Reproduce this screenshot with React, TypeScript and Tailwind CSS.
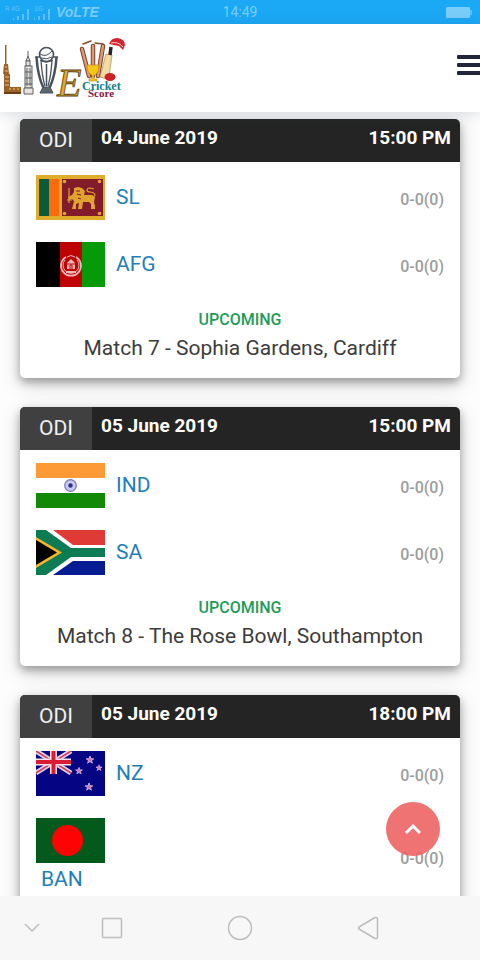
import React from 'react'

type Team = { code: string; name: string; score: string; wrap?: boolean }
type Match = { type: string; date: string; time: string; teams: Team[]; status?: string; venue?: string }

const MATCHES: Match[] = [
  {
    type: 'ODI', date: '04 June 2019', time: '15:00 PM', status: 'UPCOMING',
    venue: 'Match 7 - Sophia Gardens, Cardiff',
    teams: [{ code: 'SL', name: 'Sri Lanka', score: '0-0(0)' }, { code: 'AFG', name: 'Afghanistan', score: '0-0(0)' }],
  },
  {
    type: 'ODI', date: '05 June 2019', time: '15:00 PM', status: 'UPCOMING',
    venue: 'Match 8 - The Rose Bowl, Southampton',
    teams: [{ code: 'IND', name: 'India', score: '0-0(0)' }, { code: 'SA', name: 'South Africa', score: '0-0(0)' }],
  },
  {
    type: 'ODI', date: '05 June 2019', time: '18:00 PM',
    teams: [{ code: 'NZ', name: 'New Zealand', score: '0-0(0)' }, { code: 'BAN', name: 'Bangladesh', score: '0-0(0)', wrap: true }],
  },
]

const STAR = '0,-4 1,-1.2 3.8,-1.2 1.5,0.5 2.4,3.2 0,1.6 -2.4,3.2 -1.5,0.5 -3.8,-1.2 -1,-1.2'

function FlagArt({ code }: { code: string }) {
  switch (code) {
    case 'SL':
      return (
        <>
          <rect width="69" height="45" fill="#e0ac2b" />
          <rect x="3" y="4" width="10" height="37" fill="#0b5a3c" />
          <rect x="13" y="4" width="10" height="37" fill="#fb6a0c" />
          <rect x="26" y="4" width="41" height="37" fill="#821c2a" />
          <g fill="#e0a32f">
            <circle cx="28.5" cy="6.5" r="1.8" /><circle cx="63.5" cy="6.5" r="1.8" />
            <circle cx="28.5" cy="38.5" r="1.8" /><circle cx="63.5" cy="38.5" r="1.8" />
            <path d="M38 13 l4 -1 4 1 3 3 -1 4 h8 l3 2 -1 5 1 4 v3 h-4 l0 -5 -2 -2 h-6 l-1 7 h-4 l1 -6 -3 1 0 5 h-4 l1 -4 1 -4 -2 -2 -3 1 -1 -3 4 -2 2 -3z" />
            <path d="M33 13 v15 M31 25 h5 M57 22 c4 -2 1 -5 -3 -5 s-4 -4 0 -4 l4 1" fill="none" stroke="#e0a32f" strokeWidth="1.2" />
          </g>
          <path d="M40 16 h4 M41 19 l4 1 M42 23 l3 1" stroke="#821c2a" strokeWidth="1" />
        </>
      )
    case 'AFG':
      return (
        <>
          <rect width="24" height="45" fill="#000" />
          <rect x="24" width="23" height="45" fill="#be0303" />
          <rect x="46" width="23" height="45" fill="#069a08" />
          <g fill="none" stroke="#f0b9b9">
            <path d="M30 15 a10 10 0 1 0 10 0" strokeWidth="1.8" />
            <path d="M29 18 a8 8 0 1 0 12 0" strokeWidth="1" />
            <path d="M31 15 q4 -3 8 0" strokeWidth="1" />
          </g>
          <path d="M31 27 v-6 l2 -2 2 -2 2 2 2 2 v6z" fill="#f0b9b9" />
          <path d="M34 27 v-4 h2 v4 M31 22 h8" stroke="#be0303" fill="none" />
          <path d="M30 30 h10" stroke="#f0b9b9" strokeWidth="2" />
        </>
      )
    case 'IND':
      return (
        <>
          <rect width="69" height="45" fill="#fff" />
          <rect width="69" height="15" fill="#fd9a35" />
          <rect y="30" width="69" height="15" fill="#128a08" />
          <circle cx="34.5" cy="22.5" r="5.8" fill="#c9c9ea" stroke="#7676bd" strokeWidth="1.2" />
          <circle cx="34.5" cy="22.5" r="2.2" fill="#303098" />
        </>
      )
    case 'SA':
      return (
        <>
          <rect width="69" height="45" fill="#fff" />
          <path d="M17 0 H69 V15 H37z" fill="#e03a37" />
          <path d="M17 45 H69 V31 H37z" fill="#071c92" />
          <path d="M0 0 H10 L35 18 H69 V27 H35 L10 45 H0z" fill="#0d7b54" />
          <path d="M0 7 L26 22.5 L0 38z" fill="#f5b62d" />
          <path d="M0 10 L21 22.5 L0 35z" fill="#000" />
        </>
      )
    case 'NZ':
      return (
        <>
          <rect width="69" height="45" fill="#050584" />
          <path d="M0 0 L35 22 M35 0 L0 22" stroke="#e6cfe6" strokeWidth="5" />
          <path d="M0 0 L35 22 M35 0 L0 22" stroke="#c8405c" strokeWidth="1.5" />
          <path d="M17.5 0 V23 M0 11 H35" stroke="#f3dfea" strokeWidth="7" />
          <path d="M17.5 0 V23 M0 11 H35" stroke="#d81c34" strokeWidth="4" />
          <g fill="#d272b4" stroke="#dcc4ea" strokeWidth="0.8">
            <polygon points={STAR} transform="translate(54 9)" />
            <polygon points={STAR} transform="translate(63 17) scale(.8)" />
            <polygon points={STAR} transform="translate(43 20) scale(.9)" />
            <polygon points={STAR} transform="translate(53 36)" />
          </g>
        </>
      )
    default:
      return (
        <>
          <rect width="69" height="45" fill="#04591c" />
          <circle cx="31.5" cy="22.5" r="15.5" fill="#fd0303" />
        </>
      )
  }
}

function Flag({ team }: { team: Team }) {
  return (
    <svg className="block shrink-0" width="69" height="45" viewBox="0 0 69 45" role="img" aria-label={team.name}>
      <FlagArt code={team.code} />
    </svg>
  )
}

function StatusBar() {
  return (
    <div className="grid h-6 shrink-0 grid-cols-3 items-center bg-[#1ba8f5] text-[#79cdf9]">
      <div className="flex items-center gap-1 pl-1">
        <svg width="48" height="20" viewBox="0 -2 48 20" fill="currentColor" aria-hidden="true">
          <g opacity="0.7">
            <path d="M9 14h1v2h-1z M13 12h2v4h-2z M18 10h2v6h-2z M23 5h2v11h-2z" />
            <path d="M30 14h1v2h-1z M34 12h2v4h-2z M39 10h2v6h-2z M44 5h2v11h-2z" />
            <text x="1" y="7" fontSize="7" fontFamily="Roboto, sans-serif">R 4G</text>
            <text x="30" y="7" fontSize="7" fontFamily="Roboto, sans-serif">3G</text>
          </g>
        </svg>
        <span className="font-['Liberation_Sans',sans-serif] text-sm leading-6 font-bold italic">VoLTE</span>
      </div>
      <span className="text-center text-sm leading-6">14:49</span>
      <svg className="mr-2 justify-self-end" width="26" height="12" viewBox="0 0 26 12" role="img" aria-label="Battery">
        <rect x="0" y="1" width="24" height="11" rx="1" fill="#79cdf9" />
        <rect x="24" y="4" width="2" height="5" fill="#58bff7" />
      </svg>
    </div>
  )
}

function Logo() {
  return (
    <svg width="128" height="88" viewBox="0 24 128 88" role="img" aria-label="Live Cricket Score">
      {/* clock tower on a brick base */}
      <g fill="#9c6226">
        <path d="M5 45 h1.5 v20 h-1.5z M4 64 h4 l1 10 h-6z M4 74 h6 v14 h-6z M4 87 h17 v5 h-17z" />
        <path d="M4 92 h17 v2 h-17z" fill="#6d3d12" />
        <path d="M5 67 h2 M5 71 h3 M5 77 h4 M5 81 h4 M5 85 h4 M9 89 h2 M13 89 h2 M17 89 h2" stroke="#e9c184" />
      </g>
      {/* stone tower */}
      <g stroke="#5b6067" fill="#e7e4df">
        <path d="M28 51 v6 M26 61 l2 -5 2 5z" />
        <rect x="26" y="61" width="4" height="5" />
        <rect x="25" y="66" width="7" height="22" />
        <path d="M24 88 h9 v6 h-9z M27 68 v18 M30 68 v18 M25 72 h7 M25 78 h7 M25 84 h7" />
      </g>
      {/* trophy */}
      <g fill="none" stroke="#47525d">
        <circle cx="46.5" cy="54.5" r="7" fill="#fafafa" strokeWidth="1.6" />
        <path d="M40 54 q6 4 12 -3 M41 58 q6 2 11 -1" />
        <path d="M36.500 57 q1 18 7 31 M56.500 57 q-1 18 -7 31" strokeWidth="2.5" />
        <path d="M35 57 h5 M53 57 h5 M40 60 q6 4 13 0 M41 60 q1 16 4 26 M52 60 q-1 16 -4 26" strokeWidth="1.3" />
        <path d="M46.5 64 v22" strokeWidth="1.5" />
        <path d="M43 87 h7 l3 6 h-13z" fill="#5b666f" />
      </g>
      <text x="57" y="96" fontFamily="'Liberation Serif', serif" fontStyle="italic" fontSize="40" fill="#e0a92f" stroke="#5a3d12" strokeWidth="0.8">E</text>
      {/* stumps, cup, bat and ball */}
      <g strokeLinecap="round">
        <path d="M82 49 L89 76 M93 46 V76 M103 46 L98 76" stroke="#7c3f28" strokeWidth="4.5" />
        <path d="M82 49 L89 76 M93 46 V76 M103 46 L98 76" stroke="#dd9b74" strokeWidth="2.5" />
        <path d="M83 44 L91 41 M95 43 L103 44" stroke="#8a4a2a" strokeWidth="1.5" />
      </g>
      <path d="M87 65 h12 q0 9 -5 10 l0 4 h3 v2 h-8 v-2 h3 v-4 q-5 -1 -5 -10z" fill="#f5c518" stroke="#b98210" strokeWidth="0.6" />
      <path d="M106 54 l6 1 -3 22 q-4 3 -9 0z" fill="#f1dda3" stroke="#a78a4b" strokeWidth="0.7" />
      <path d="M111 47 l-1 8" stroke="#262626" strokeWidth="3.5" />
      <path d="M109 44 q2 -6 8 -6 q8 1 8 7 l-2 5 -4 -4z" fill="#d4232c" />
      <path d="M111 43 q7 -2 12 4" stroke="#fff" strokeWidth="0.8" fill="none" />
      <ellipse cx="110" cy="77" rx="5.5" ry="4" fill="#cb2026" />
      <text x="82" y="90" fontFamily="'Liberation Serif', serif" fontWeight="700" fontSize="12" fill="#0f7f8c">Cricket</text>
      <text x="88" y="97" fontFamily="'Liberation Serif', serif" fontWeight="700" fontSize="11" fill="#7d1847">Score</text>
    </svg>
  )
}

function TeamRow({ team }: { team: Team }) {
  if (team.wrap) {
    return (
      <div className="flex items-center justify-between">
        <div className="pb-1">
          <Flag team={team} />
          <a href={`#${team.code}`} className="block pl-[5px] text-[21px] leading-8 text-[#1f7fb8]">{team.code}</a>
        </div>
        <span className="text-base leading-5 font-medium text-[#9d9d9d]">{team.score}</span>
      </div>
    )
  }
  return (
    <div className="flex items-start justify-between">
      <div className="flex gap-[11px]">
        <Flag team={team} />
        <a href={`#${team.code}`} className="text-[21px] leading-[44px] text-[#1f7fb8]">{team.code}</a>
      </div>
      <span className="text-base leading-[50px] font-medium text-[#9d9d9d]">{team.score}</span>
    </div>
  )
}

function MatchCard({ match }: { match: Match }) {
  return (
    <article className="shrink-0 overflow-hidden rounded-[5px] bg-white shadow-[0_4px_8px_rgba(0,0,0,0.3),0_6px_20px_rgba(0,0,0,0.19)]">
      <header className="flex h-[43px] bg-[#242424] text-white">
        <span className="w-[72px] bg-[#404040] text-center text-[21px] leading-[43px] text-[#f0f0f0]">{match.type}</span>
        <div className="flex flex-1 justify-between px-[9px] text-[19px] leading-[38px] font-bold">
          <time>{match.date}</time>
          <span>{match.time}</span>
        </div>
      </header>
      <div className="flex flex-col gap-[17px] px-4 pt-[13px]">
        {match.teams.map(t => <TeamRow key={t.code} team={t} />)}
      </div>
      <div className="pt-4 pb-[14px] text-center">
        {match.status && <p className="text-base leading-6 font-medium text-[#1f9d58]">{match.status}</p>}
        {match.venue && <p className="text-[21px] leading-8 text-[#3c3c3c]">{match.venue}</p>}
      </div>
    </article>
  )
}

function NavBar() {
  const btn = 'flex h-16 items-center justify-center'
  return (
    <nav className="flex h-16 shrink-0 items-center bg-[#f7f7f7] text-[#bdbdbd]">
      <button aria-label="Hide navigation" className={`${btn} w-12 pl-4`}>
        <svg width="16" height="10" viewBox="0 0 16 10" fill="none" stroke="currentColor" strokeWidth="1.5"><path d="M1 1l7 7 7-7" /></svg>
      </button>
      <div className="grid flex-1 grid-cols-3 pr-12">
        <button aria-label="Recent apps" className={btn}>
          <svg width="22" height="22" viewBox="0 0 22 22" fill="none" stroke="currentColor" strokeWidth="1.5"><rect x="1.5" y="1.5" width="19" height="19" rx="1" /></svg>
        </button>
        <button aria-label="Home" className={btn}>
          <svg width="26" height="26" viewBox="0 0 26 26" fill="none" stroke="currentColor" strokeWidth="1.5"><circle cx="13" cy="13" r="11.5" /></svg>
        </button>
        <button aria-label="Back" className={btn}>
          <svg width="22" height="24" viewBox="0 0 22 24" fill="none" stroke="currentColor" strokeWidth="1.5" strokeLinejoin="round"><path d="M2 11 L18 1.5 Q20.5 1 20.5 3 V21 Q20.5 23 18 22.5 L2 13 Q1 12 2 11z" /></svg>
        </button>
      </div>
    </nav>
  )
}

export default function App() {
  return (
    <div className="flex h-screen flex-col overflow-hidden bg-[#fdfdfd] font-[Roboto,'Liberation_Sans',sans-serif]">
      <StatusBar />
      <header className="z-10 flex h-[88px] shrink-0 items-center justify-between bg-white shadow-[0_2px_14px_rgba(60,80,110,0.2)]">
        <Logo />
        <button aria-label="Menu" className="mb-1.5">
          <svg className="block" width="24" height="22" viewBox="0 0 24 22" fill="#23263a">
            <rect x="1" y="1" width="26" height="4" rx="1" />
            <rect x="1" y="9" width="26" height="4" rx="1" />
            <rect x="1" y="17" width="26" height="4" rx="1" />
          </svg>
        </button>
      </header>
      <div className="relative min-h-0 flex-1">
        <main className="flex h-full flex-col gap-[29px] overflow-hidden px-5 pt-[7px]">
          {MATCHES.map((m, i) => <MatchCard key={i} match={m} />)}
        </main>
        <button aria-label="Back to top" className="absolute right-10 bottom-10 flex size-[54px] items-center justify-center rounded-full bg-[#ee6464]/90">
          <svg width="18" height="12" viewBox="0 0 18 12" fill="none" stroke="#fff" strokeWidth="3"><path d="M2 10l7-7 7 7" /></svg>
        </button>
      </div>
      <NavBar />
    </div>
  )
}
